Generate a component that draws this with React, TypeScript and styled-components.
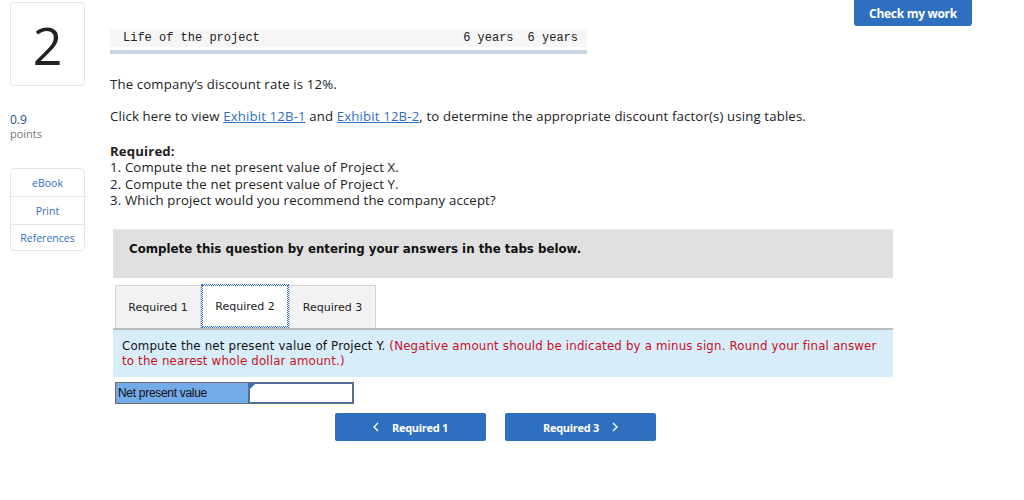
import React from 'react';
import styled, {createGlobalStyle} from 'styled-components';

const Global = createGlobalStyle`
  html, body { margin: 0; padding: 0; background: #fff; }
  body { font-family: 'Open Sans', 'Lato', sans-serif; color: #222; }
`;

const Page = styled.div`
  position: relative;
  width: 1024px;
  height: 500px;
  display: flex;
  align-items: flex-start;
  overflow: hidden;
`;

const Side = styled.div`
  width: 75px;
  margin: 2px 0 0 10px;
  display: flex;
  flex-direction: column;
`;

const NumBox = styled.div`
  height: 84px;
  border: 1px solid #e6e6e6;
  border-radius: 4px;
  box-sizing: border-box;
  display: flex;
  align-items: center;
  justify-content: center;
  font-family: 'Open Sans', sans-serif;
  font-size: 52px;
  font-weight: 400;
  color: #222;
`;

const Points = styled.div`
  margin-top: 27px;
  font-size: 11px;
  line-height: 14px;
  color: #777;
  b { display: block; font-weight: 400; color: #1d4f8e; font-size: 12px; }
`;

const NavBox = styled.div`
  margin-top: 27px;
  border: 1px solid #e6e6e6;
  border-radius: 4px;
  display: flex;
  flex-direction: column;
`;

const NavItem = styled.div<{h: number; last?: boolean}>`
  height: ${(p) => p.h}px;
  display: flex;
  align-items: center;
  justify-content: center;
  font-size: 10.5px;
  color: #2f6fbf;
  border-bottom: ${(p) => (p.last ? 'none' : '1px solid #e6e6e6')};
`;

const Main = styled.div`
  margin-left: 25px;
  width: 785px;
  display: flex;
  flex-direction: column;
`;

const DataRow = styled.div`
  margin-top: 29px;
  width: 477px;
  height: 18px;
  background: #f6f6f6;
  display: flex;
  align-items: center;
  font-family: 'Liberation Mono', monospace;
  font-size: 12px;
  color: #222;
  span:first-child { margin-left: 13px; flex: 1; }
  span:nth-child(2) { margin-right: 14px; }
  span:nth-child(3) { margin-right: 9px; }
`;

const Rule = styled.div`
  width: 477px;
  height: 4px;
  margin-top: 3px;
  background: #c9d3e1;
`;

const Para = styled.p<{mt: number}>`
  margin: ${(p) => p.mt}px 0 0;
  font-size: 13.2px;
  letter-spacing: 0.15px;
  line-height: 16.4px;
  color: #222;
  a { color: #2f6fbf; text-decoration: underline; }
  strong { font-weight: 700; }
`;

const Banner = styled.div`
  margin: 21px 0 0 3px;
  width: 780px;
  height: 49px;
  background: #e0e0e0;
  border-top: 1px solid #e8e8e8;
  padding: 12px 0 0 16px;
  box-sizing: border-box;
  font-family: 'DejaVu Sans', Verdana, sans-serif;
  font-weight: 700;
  font-size: 11.8px;
  color: #111;
`;

const Tabs = styled.div`
  margin: 6px 0 0 5px;
  display: flex;
  align-items: flex-end;
  height: 44px;
`;

const Tab = styled.div<{active?: boolean; w: number}>`
  width: ${(p) => p.w}px;
  box-sizing: border-box;
  display: flex;
  align-items: center;
  justify-content: center;
  font-family: 'DejaVu Sans', Verdana, sans-serif;
  font-size: 11px;
  color: #222;
  background: ${(p) => (p.active ? '#fff' : '#f2f2f2')};
  border: ${(p) => (p.active ? '1px dotted #2f6fd0' : '1px solid #d4d4d4')};
  border-bottom: ${(p) => (p.active ? '1px dotted #2f6fd0' : 'none')};
  outline: ${(p) => (p.active ? '1px dotted #2f6fd0' : 'none')};
  outline-offset: -2px;
  height: ${(p) => (p.active ? 44 : 43)}px;
`;

const Info = styled.div`
  margin-left: 3px;
  width: 780px;
  background: #d8edfa;
  border-top: 2px solid #bcbcbc;
  box-sizing: border-box;
  padding: 9px 15px 8px 9px;
  font-family: 'DejaVu Sans', Verdana, sans-serif;
  font-size: 11.8px;
  letter-spacing: 0.17px;
  line-height: 15px;
  color: #111;
  em { font-style: normal; color: #c8101e; }
`;

const AnswerRow = styled.div`
  margin: 5px 0 0 5px;
  display: flex;
  height: 22px;
  width: 239px;
  border: 1px solid #6a6a6a;
  box-sizing: border-box;
`;

const Label = styled.div`
  width: 130px;
  background: #73aae8;
  display: flex;
  align-items: center;
  padding-left: 2px;
  font-family: 'Liberation Sans', Arial, sans-serif;
  font-size: 12px;
  letter-spacing: -0.3px;
  color: #111;
  border-right: 1px solid #6a6a6a;
`;

const Field = styled.div`
  position: relative;
  flex: 1;
  background: #fff;
  border: 1px solid #3e74b8;
  &::before {
    content: '';
    position: absolute;
    left: 0;
    top: 0;
    border-top: 5px solid #2f6fbf;
    border-right: 5px solid transparent;
  }
`;

const NavButtons = styled.div`
  margin: 9px 0 0 225px;
  display: flex;
  gap: 19px;
`;

const Button = styled.div`
  width: 151px;
  height: 28px;
  background: #2f6fbf;
  border-radius: 2px;
  display: flex;
  align-items: center;
  justify-content: center;
  gap: 13px;
  font-family: 'Open Sans', sans-serif;
  font-weight: 700;
  font-size: 11px;
  letter-spacing: -0.3px;
  color: #fff;
  svg { display: block; }
`;

const CheckBtn = styled.div`
  position: absolute;
  top: 0;
  left: 854px;
  width: 118px;
  height: 26px;
  background: #2f6fbf;
  border-radius: 0 0 3px 3px;
  display: flex;
  align-items: center;
  justify-content: center;
  font-family: 'Open Sans', sans-serif;
  font-weight: 700;
  font-size: 12px;
  letter-spacing: -0.3px;
  color: #fff;
`;

const Chevron = ({dir}: {dir: 'left' | 'right'}) => (
  <svg width="6" height="10" viewBox="0 0 6 10">
    <path
      d={dir === 'left' ? 'M5 1 L1 5 L5 9' : 'M1 1 L5 5 L1 9'}
      fill="none"
      stroke="#fff"
      strokeWidth="1.4"
    />
  </svg>
);

export default function App() {
  return (
    <Page>
      <Global />
      <Side>
        <NumBox>2</NumBox>
        <Points>
          <b>0.9</b>
          points
        </Points>
        <NavBox>
          <NavItem h={27}>eBook</NavItem>
          <NavItem h={27}>Print</NavItem>
          <NavItem h={25} last>
            References
          </NavItem>
        </NavBox>
      </Side>
      <Main>
        <DataRow>
          <span>Life of the project</span>
          <span>6 years</span>
          <span>6 years</span>
        </DataRow>
        <Rule />
        <Para mt={22}>The company’s discount rate is 12%.</Para>
        <Para mt={16}>
          Click here to view <a>Exhibit 12B-1</a> and <a>Exhibit 12B-2</a>, to determine the appropriate
          discount factor(s) using tables.
        </Para>
        <Para mt={18}>
          <strong>Required:</strong>
          <br />
          1. Compute the net present value of Project X.
          <br />
          2. Compute the net present value of Project Y.
          <br />
          3. Which project would you recommend the company accept?
        </Para>
        <Banner>Complete this question by entering your answers in the tabs below.</Banner>
        <Tabs>
          <Tab w={86}>Required 1</Tab>
          <Tab w={88} active>
            Required 2
          </Tab>
          <Tab w={87}>Required 3</Tab>
        </Tabs>
        <Info>
          Compute the net present value of Project Y.{' '}
          <em>
            (Negative amount should be indicated by a minus sign. Round your final answer to the nearest
            whole dollar amount.)
          </em>
        </Info>
        <AnswerRow>
          <Label>Net present value</Label>
          <Field />
        </AnswerRow>
        <NavButtons>
          <Button>
            <Chevron dir="left" />
            Required 1
          </Button>
          <Button>
            Required 3
            <Chevron dir="right" />
          </Button>
        </NavButtons>
      </Main>
      <CheckBtn>Check my work</CheckBtn>
    </Page>
  );
}
